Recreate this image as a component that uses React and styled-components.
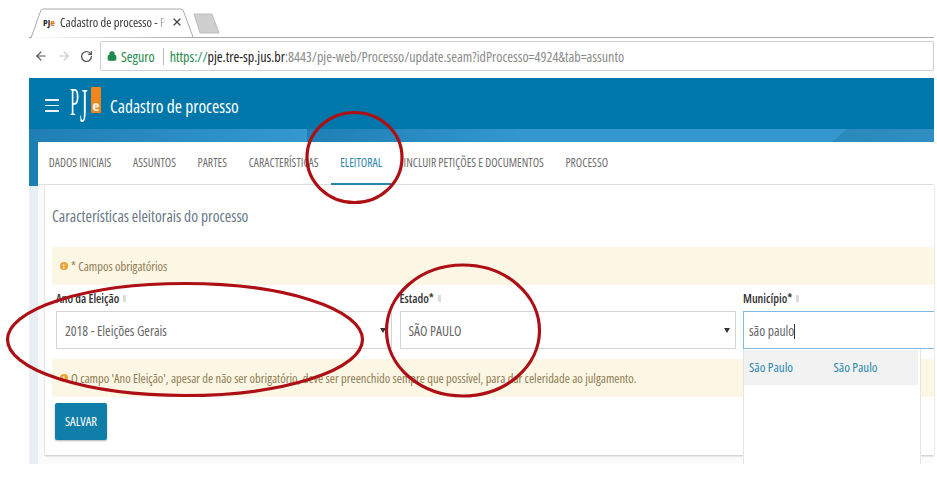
import React from "react";
import styled, { createGlobalStyle } from "styled-components";
import { ArrowLeft, ArrowRight, RotateCw, X, Lock } from "lucide-react";

const tabs = [
	{ label: "DADOS INICIAIS" },
	{ label: "ASSUNTOS" },
	{ label: "PARTES" },
	{ label: "CARACTERÍSTICAS" },
	{ label: "ELEITORAL", active: true },
	{ label: "INCLUIR PETIÇÕES E DOCUMENTOS" },
	{ label: "PROCESSO" },
];

const fields = [
	{ label: "Ano da Eleição", value: "2018 - Eleições Gerais" },
	{ label: "Estado*", value: "SÃO PAULO" },
];

const GlobalStyle = createGlobalStyle`
	html, body {
		margin: 0;
		background: #fff;
		overflow: hidden;
	}
	* {
		box-sizing: border-box;
	}
	body {
		font-family: "Open Sans", "Liberation Sans", sans-serif;
		font-stretch: 75%;
	}
`;

const Page = styled.div`
	position: relative;
	width: 937px;
	height: 478px;
	padding: 8px 3px 0 29px;
	overflow: hidden;
`;

const TabStrip = styled.div`
	display: flex;
	align-items: flex-end;
	height: 30px;
	border-bottom: 1px solid #a9a9a9;
`;

const BrowserTab = styled.div`
	position: relative;
	display: flex;
	align-items: center;
	width: 165px;
	height: 30px;
	margin-bottom: -1px;
	padding: 0 0 2px 14px;
	font-size: 12.5px;
	color: #333;
`;

const TabShape = styled.svg`
	position: absolute;
	left: 0;
	top: 0;
`;

const Favicon = styled.span`
	position: relative;
	width: 17px;
	font-size: 9.5px;
	font-weight: 700;
	color: #222;

	b {
		color: #d9791f;
	}
`;

const TabTitle = styled.span`
	position: relative;
	width: 106px;
	white-space: nowrap;
	overflow: hidden;
	-webkit-mask-image: linear-gradient(to right, #000 90%, transparent);
`;

const CloseIcon = styled(X)`
	position: relative;
	margin-left: 5px;
	color: #444;
`;

const NewTab = styled.svg`
	margin: 0 0 3px -1px;
`;

const Toolbar = styled.div`
	display: flex;
	align-items: center;
	height: 39px;
	padding: 0 0 3px 5px;
	color: #555;
`;

const NavIcon = styled.span`
	display: flex;
	width: ${(p) => p.$w}px;
	color: ${(p) => p.$color || "#555"};
`;

const Omnibox = styled.div`
	display: flex;
	flex: 1;
	align-items: center;
	height: 30px;
	margin-left: -4px;
	padding: 0 0 0 6px;
	border: 1px solid #cfcfd4;
	border-radius: 2px;
	font-size: 14px;
	white-space: nowrap;
	color: #8a8a8a;
`;

const Secure = styled.span`
	margin-left: 4px;
	color: #1f8a4c;
`;

const UrlDivider = styled.span`
	width: 1px;
	height: 17px;
	margin: 0 6px 0 8px;
	background: #bbb;
`;

const Scheme = styled.span`
	color: #1f8a4c;
`;

const Host = styled.span`
	color: #222;
`;

const Header = styled.header`
	display: flex;
	align-items: center;
	height: 51px;
	margin-top: 1px;
	padding: 4px 0 0 16px;
	background: #0077aa;
	color: #fff;
`;

const Burger = styled.span`
	display: flex;
	flex-direction: column;
	gap: 4px;
	width: 14px;
	margin-right: 11px;

	i {
		display: block;
		height: 1.5px;
		background: #e8f2f7;
	}
`;

const Logo = styled.span`
	display: flex;
	align-items: flex-start;
	align-self: flex-start;
	width: 31px;
	height: 34px;
	margin-top: 5px;
	font-family: "Liberation Serif", serif;
	font-size: 39px;
	line-height: 30px;
	color: #fff;
`;

const LogoLetter = styled.span`
	display: block;
	width: ${(p) => p.$w}px;
	transform: scale(${(p) => p.$x}, ${(p) => p.$y});
	transform-origin: left top;
`;

const LogoBlock = styled.span`
	display: flex;
	align-items: flex-end;
	justify-content: center;
	width: 10px;
	height: 26px;
	margin: 0 0 0 3px;
	background: #f08519;
	font-family: "Open Sans", sans-serif;
	font-size: 15px;
	font-weight: 700;
	line-height: 16px;
`;

const HeaderTitle = styled.h1`
	margin: 0 0 0 9px;
	font-size: 17.5px;
	font-weight: 400;
`;

const Band = styled.svg`
	display: block;
`;

const Workspace = styled.div`
	position: relative;
	display: flex;
	flex-direction: column;
	height: 322px;
	padding-left: 9px;
	background: linear-gradient(to bottom, #1a80b4 44px, #e8eef3 44px) left top / 9px 100% no-repeat, #fbfbfb;
`;

const TabBar = styled.nav`
	display: flex;
	height: 43px;
	background: #fff;
	border-top-left-radius: 3px;
	border-bottom: 1px solid #e2e2e2;
`;

const TabItem = styled.a`
	display: flex;
	align-items: center;
	padding: 0 ${(p) => (p.$active ? 9.5 : 10.8)}px 2px;
	margin: 0 ${(p) => (p.$active ? 1.3 : 0)}px -1px;
	font-size: 11.7px;
	white-space: nowrap;
	color: ${(p) => (p.$active ? "#2a86ad" : "#6f6f6f")};
	border-bottom: 2px solid ${(p) => (p.$active ? "#2a86ad" : "transparent")};
`;

const Card = styled.section`
	display: flex;
	flex-direction: column;
	height: 270px;
	margin: 0 0 0 7px;
	padding: 21px 0 0 7px;
	background: #fff;
	box-shadow: 0 1px 2px rgba(0, 0, 0, 0.22);
`;

const CardTitle = styled.h2`
	margin: 0;
	font-size: 15.5px;
	font-weight: 400;
	line-height: 20px;
	color: #687886;
`;

const Alert = styled.div`
	display: flex;
	align-items: center;
	gap: 3px;
	height: 38px;
	margin-top: ${(p) => p.$top}px;
	padding-left: 8px;
	background: #fcf6e4;
	border-radius: 2px;
	font-size: 12.5px;
	white-space: nowrap;
	color: #8f7b52;
`;

const AlertIcon = styled.span`
	display: flex;
	align-items: center;
	justify-content: center;
	width: 8px;
	height: 8px;
	border-radius: 50%;
	background: #f0a030;
	font-size: 7px;
	font-weight: 700;
	color: #fff;
`;

const FormRow = styled.div`
	display: grid;
	grid-template-columns: 336px 336px 191px;
	column-gap: 7.5px;
	margin: 5px 0 0 4px;
`;

const Field = styled.div`
	position: relative;
	min-width: 0;
`;

const Label = styled.label`
	display: flex;
	align-items: center;
	gap: 4px;
	height: 21px;
	padding-bottom: 4px;
	font-size: 12px;
	font-weight: 600;
	color: #333;

	i {
		width: 3px;
		height: 7px;
		background: #dcdcdc;
	}
`;

const Box = styled.div`
	display: flex;
	align-items: center;
	justify-content: space-between;
	height: 38px;
	padding: 0 5px 0 ${(p) => (p.$focus ? 5 : 8)}px;
	border: 1px solid ${(p) => (p.$focus ? "#7db9e0" : "#d4d4d4")};
	${(p) => p.$focus && "border-right: 0;"}
	font-size: 13.6px;
	color: #666;
`;

const Caret = styled.span`
	width: 0;
	height: 0;
	border-left: 3px solid transparent;
	border-right: 3px solid transparent;
	border-top: 5px solid #333;
`;

const Cursor = styled.span`
	display: inline-block;
	width: 1px;
	height: 15px;
	vertical-align: -3px;
	background: #333;
`;

const SaveButton = styled.button`
	width: 52px;
	height: 37px;
	margin: 6px 0 0 3px;
	padding: 0;
	border: 0;
	border-radius: 2px;
	background: #0f7ea8;
	box-shadow: 0 1px 2px rgba(0, 0, 0, 0.3);
	font-family: inherit;
	font-stretch: inherit;
	font-size: 12.6px;
	font-weight: 400;
	color: #fff;
`;

const Suggestions = styled.div`
	position: absolute;
	left: 0;
	top: 59px;
	width: 178px;
	height: 115px;
	padding-top: 1px;
	background: #fff;
	border-left: 1px solid #e4e4e4;
	border-right: 1px solid #e4e4e4;
`;

const Suggestion = styled.div`
	display: flex;
	align-items: center;
	width: 174px;
	height: 35px;
	padding: 0 0 2px 5px;
	background: #f2f2f2;
	font-size: 13px;
	color: #2a88ad;

	span {
		width: 87px;
	}
`;

const Annotations = styled.svg`
	position: absolute;
	left: 0;
	top: 0;
	pointer-events: none;
`;

export default function App() {
	return (
		<Page>
			<GlobalStyle />
			<TabStrip>
				<BrowserTab>
					<TabShape width="165" height="30" viewBox="0 0 165 30">
						<path d="M2 30 L12 2 Q13 1 15 1 L151 1 Q153 1 154 2 L164 29" fill="#fff" stroke="#a9a9a9" />
					</TabShape>
					<Favicon>
						PJ<b>e</b>
					</Favicon>
					<TabTitle>Cadastro de processo - PJe</TabTitle>
					<CloseIcon size={12} strokeWidth={2.4} />
				</BrowserTab>
				<NewTab width="27" height="21" viewBox="0 0 27 21">
					<path d="M1 1 L19 1 L26 20 L7 20 Z" fill="#cfcfcf" stroke="#bdbdbd" />
				</NewTab>
			</TabStrip>
			<Toolbar>
				<NavIcon $w={23}>
					<ArrowLeft size={14} strokeWidth={2} />
				</NavIcon>
				<NavIcon $w={23} $color="#c8c8c8">
					<ArrowRight size={14} strokeWidth={2} />
				</NavIcon>
				<NavIcon $w={24}>
					<RotateCw size={13} strokeWidth={2.4} />
				</NavIcon>
				<Omnibox>
					<Lock size={10} strokeWidth={3} color="#1f8a4c" fill="#1f8a4c" />
					<Secure>Seguro</Secure>
					<UrlDivider />
					<Scheme>https://</Scheme>
					<Host>pje.tre-sp.jus.br</Host>
					:8443/pje-web/Processo/update.seam?idProcesso=4924&amp;tab=assunto
				</Omnibox>
			</Toolbar>
			<Header>
				<Burger>
					<i />
					<i />
					<i />
				</Burger>
				<Logo>
					<LogoLetter $w={10} $x={0.42} $y={1}>P</LogoLetter>
					<LogoLetter $w={8} $x={0.5} $y={1.25}>J</LogoLetter>
					<LogoBlock>e</LogoBlock>
				</Logo>
				<HeaderTitle>Cadastro de processo</HeaderTitle>
			</Header>
			<Band width="905" height="13" viewBox="0 0 905 13">
				<defs>
					<linearGradient id="fadeRight" x1="0" x2="1">
						<stop offset="0" stopColor="#1f7fb4" />
						<stop offset="1" stopColor="#3498cf" />
					</linearGradient>
					<linearGradient id="fadeEnd" x1="0" x2="1">
						<stop offset="0" stopColor="#2a88ba" />
						<stop offset="1" stopColor="#2f8fc2" />
					</linearGradient>
				</defs>
				<rect width="905" height="13" fill="#3498cf" />
				<path d="M0 0 H262 L278 13 H0 Z" fill="url(#fadeRight)" />
				<path d="M278 0 H488 L503 13 H278 Z" fill="url(#fadeRight)" />
				<path d="M588 0 L575 13 H800 L815 0 Z" fill="#3498cf" />
				<path d="M818 0 L803 13 H905 V0 Z" fill="url(#fadeEnd)" />
			</Band>
			<Workspace>
				<TabBar>
					{tabs.map((tab) => (
						<TabItem key={tab.label} $active={tab.active}>
							{tab.label}
						</TabItem>
					))}
				</TabBar>
				<Card>
					<CardTitle>Características eleitorais do processo</CardTitle>
					<Alert $top={21}>
						<AlertIcon>!</AlertIcon>* Campos obrigatórios
					</Alert>
					<FormRow>
						{fields.map((field) => (
							<Field key={field.label}>
								<Label>
									{field.label}
									<i />
								</Label>
								<Box>
									{field.value}
									<Caret />
								</Box>
							</Field>
						))}
						<Field>
							<Label>
								Município*
								<i />
							</Label>
							<Box $focus>
								<span>
									são paulo
									<Cursor />
								</span>
							</Box>
							<Suggestions>
								<Suggestion>
									<span>São Paulo</span>
									<span>São Paulo</span>
								</Suggestion>
							</Suggestions>
						</Field>
					</FormRow>
					<Alert $top={10}>
						<AlertIcon>!</AlertIcon>O campo 'Ano Eleição', apesar de não ser obrigatório, deve ser preenchido sempre que possível, para dar celeridade ao julgamento.
					</Alert>
					<SaveButton>SALVAR</SaveButton>
				</Card>
			</Workspace>
			<Annotations width="937" height="478" viewBox="0 0 937 478" fill="none" stroke="#ad0f14" strokeWidth="3.2">
				<ellipse cx="354.5" cy="157.5" rx="47.5" ry="45" />
				<ellipse cx="185" cy="339.5" rx="177.5" ry="56" />
				<ellipse cx="463" cy="330.5" rx="76.5" ry="65.5" />
			</Annotations>
		</Page>
	);
}
